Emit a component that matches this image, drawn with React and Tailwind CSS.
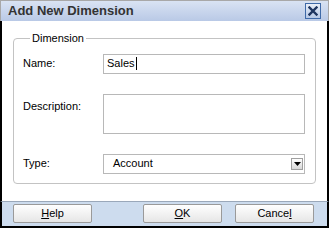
import React from "react";

const font = { fontFamily: '"Liberation Sans", Arial, sans-serif' };

function Btn({ children }) {
  return (
    <button
      className="h-[19px] w-[79px] rounded-[2px] border border-[#9a9a9a] bg-gradient-to-b from-white to-[#e6e6e6] text-[11px] leading-none text-black"
      style={font}
    >
      {children}
    </button>
  );
}

export default function App() {
  return (
    <div className="flex h-[228px] w-[329px] flex-col bg-white" style={font}>
      {/* title bar */}
      <div className="flex h-[21px] shrink-0 items-center justify-between border-x border-t border-[#a8a8a8] bg-gradient-to-b from-[#d9e3f3] to-[#b9c9e6] pl-[7px] pr-[7px]">
        <span className="text-[13px] font-bold text-[#333]">Add New Dimension</span>
        <div className="flex h-[16px] w-[16px] items-center justify-center border border-[#3f6aa8] bg-gradient-to-b from-[#e8eef8] to-[#b6c8e6]">
          <svg width="10" height="10" viewBox="0 0 10 10">
            <path d="M1.5 1.5 L8.5 8.5 M8.5 1.5 L1.5 8.5" stroke="#1e3560" strokeWidth="2.4" strokeLinecap="square" />
          </svg>
        </div>
      </div>

      {/* body */}
      <div className="flex flex-1 flex-col border-x-2 border-black pl-[11px] pr-[11px] pt-[9px]">
        <fieldset className="h-[154px] rounded-[4px] border border-[#c3c3c3] pl-[9px] pr-[10px]">
          <legend className="ml-[7px] px-[2px] text-[11px] text-black">Dimension</legend>
          <div className="mt-[7px] flex items-center">
            <span className="w-[80px] text-[11px] text-black">Name:</span>
            <div className="flex h-[20px] flex-1 items-center border border-[#b8b8b8] pl-[3px] text-[11px] text-black">
              Sales<span className="ml-[1px] inline-block h-[13px] w-px bg-black" />
            </div>
          </div>
          <div className="mt-[20px] flex items-start">
            <span className="mt-[4px] w-[80px] text-[11px] text-black">Description:</span>
            <div className="h-[40px] flex-1 border border-[#b8b8b8]" />
          </div>
          <div className="mt-[20px] flex items-center">
            <span className="w-[80px] text-[11px] text-black">Type:</span>
            <div className="flex h-[20px] flex-1 items-center justify-between border border-[#b8b8b8] pl-[9px] pr-[1px] text-[11px] text-black">
              <span>Account</span>
              <div className="flex h-[12px] w-[12px] items-center justify-center border border-[#a0a0a0] bg-gradient-to-b from-white to-[#d8d8d8]">
                <svg width="7" height="4" viewBox="0 0 7 4">
                  <path d="M0 0 H7 L3.5 4 Z" fill="#000" />
                </svg>
              </div>
            </div>
          </div>
        </fieldset>
      </div>

      {/* footer */}
      <div className="flex h-[27px] shrink-0 items-start justify-between border-x-2 border-b-2 border-t border-x-black border-b-black border-t-[#9aa8ba] bg-[#cddcee] pl-[11px] pr-[13px] pt-[2px]">
        <Btn>
          <u>H</u>elp
        </Btn>
        <div className="flex gap-[13px]">
          <Btn>
            <u>O</u>K
          </Btn>
          <Btn>
            Cance<u>l</u>
          </Btn>
        </div>
      </div>
    </div>
  );
}
